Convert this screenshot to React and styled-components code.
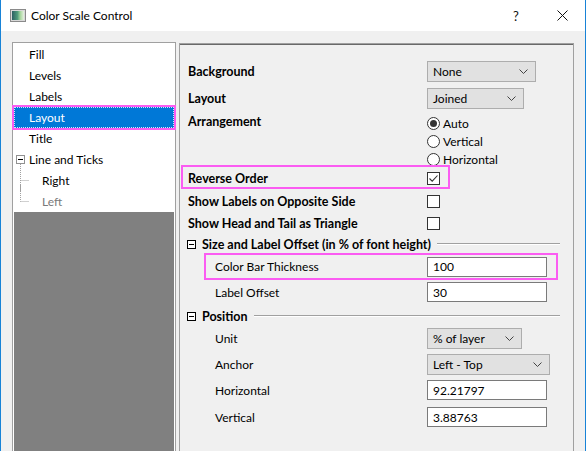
import React from "react";
import styled, { createGlobalStyle } from "styled-components";

const GlobalStyle = createGlobalStyle`
  html, body {
    margin: 0;
    padding: 0;
    background: #f0f0f0;
  }
  body {
    font-family: "Lato", "Noto Sans", sans-serif;
    font-size: 12px;
    color: #000;
  }
`;

const Window = styled.div`
  width: 586px;
  height: 451px;
  box-sizing: border-box;
  border-left: 1px solid #1883d7;
  border-right: 1px solid #1883d7;
  background: #f0f0f0;
  display: flex;
  flex-direction: column;
  overflow: hidden;
`;

const TitleBar = styled.div`
  height: 31px;
  flex: none;
  background: #fff;
  display: flex;
  align-items: center;
  padding-left: 9px;
`;

const TitleText = styled.div`
  margin-left: 5px;
  flex: 1;
  font-size: 12px;
`;

const CaptionButton = styled.div`
  width: 46px;
  height: 31px;
  display: flex;
  align-items: center;
  justify-content: center;
  font-size: 13px;
  color: #111;
`;

const Body = styled.div`
  flex: 1;
  display: flex;
  gap: 3px;
  padding: 11px 11px 0 11px;
`;

const TreePanel = styled.div`
  width: 160px;
  flex: none;
  border: 1px solid #a0a0a0;
  border-bottom: none;
  padding: 1px 1px 0 1px;
  background: #fff;
  display: flex;
  flex-direction: column;
`;

const TreeItem = styled.div`
  height: 21px;
  box-sizing: border-box;
  display: flex;
  align-items: center;
  padding-left: ${({ indent }) => indent}px;
  border: 1px ${({ selected }) => (selected ? "dotted #cfe6fa" : "solid transparent")};
  background: ${({ selected }) => (selected ? "#0078d7" : "transparent")};
  color: ${({ selected, disabled }) =>
    selected ? "#fff" : disabled ? "#7a7a7a" : "#000"};
  outline: ${({ marked }) => (marked ? "2px solid #fb5cf2" : "none")};
`;

const TreeFill = styled.div`
  flex: 1;
  background: #808080;
`;

const ExpandBox = styled.span`
  width: 9px;
  height: 9px;
  box-sizing: border-box;
  border: 1px solid ${({ dark }) => (dark ? "#000" : "#919191")};
  background: #fff;
  flex: none;
  margin-right: ${({ gap }) => gap}px;
  display: flex;
  align-items: center;
  justify-content: center;

  &::after {
    content: "";
    width: 5px;
    height: 1px;
    background: #000;
  }
`;

const TreeText = styled.span`
  margin-left: ${({ offset }) => offset || 0}px;
`;

const Frame = styled.div`
  flex: 1;
  margin-top: 1px;
  border: 1px solid #a0a0a0;
  border-bottom: none;
  display: flex;
  flex-direction: column;
`;

const FrameInner = styled.div`
  flex: 1;
  border-top: 1px solid #696969;
  padding: 13px 13px 0 8px;
  display: flex;
  flex-direction: column;
`;

const Row = styled.div`
  height: ${({ h }) => h}px;
  display: flex;
  align-items: ${({ top }) => (top ? "flex-start" : "center")};
  position: relative;
  flex: none;
`;

const Label = styled.div`
  width: 239px;
  flex: none;
  box-sizing: border-box;
  padding-left: ${({ indent }) => indent || 0}px;
  padding-top: ${({ top }) => top || 0}px;
  font-weight: ${({ bold }) => (bold ? 700 : 400)};
  font-size: ${({ bold }) => (bold ? "12.5px" : "12px")};
  white-space: nowrap;
`;

const Marker = styled.div`
  position: absolute;
  left: ${({ left }) => left}px;
  top: ${({ top }) => top}px;
  width: ${({ w }) => w}px;
  height: ${({ h }) => h}px;
  box-sizing: border-box;
  border: 2px solid #fb5cf2;
  pointer-events: none;
`;

const Dropdown = styled.div`
  width: ${({ w }) => w}px;
  height: 21px;
  box-sizing: border-box;
  border: 1px solid #adadad;
  background: #e1e1e1;
  display: flex;
  align-items: center;
  padding: 0 7px 0 5px;
  justify-content: space-between;
`;

const TextBox = styled.div`
  width: 120px;
  height: 20px;
  box-sizing: border-box;
  border: 1px solid #7a7a7a;
  background: #fff;
  display: flex;
  align-items: center;
  padding-left: 5px;
`;

const Check = styled.div`
  width: 13px;
  height: 13px;
  box-sizing: border-box;
  border: 1px solid #333;
  background: #fff;
  display: flex;
  align-items: center;
  justify-content: center;
`;

const RadioGroup = styled.div`
  display: flex;
  flex-direction: column;
  padding-top: 2px;
`;

const RadioItem = styled.div`
  height: 18px;
  display: flex;
  align-items: center;
  gap: 3px;
`;

const RadioCircle = styled.span`
  width: 13px;
  height: 13px;
  box-sizing: border-box;
  border: 1px solid #333;
  border-radius: 50%;
  background: #fff;
  display: flex;
  align-items: center;
  justify-content: center;

  &::after {
    content: "";
    display: ${({ checked }) => (checked ? "block" : "none")};
    width: 7px;
    height: 7px;
    border-radius: 50%;
    background: #333;
  }
`;

const SectionTitle = styled.div`
  display: flex;
  align-items: center;
  flex: 1;
  margin-left: -1px;
  font-weight: 700;
  font-size: 12.5px;
  white-space: nowrap;
`;

const SectionLine = styled.div`
  flex: 1;
  height: 1px;
  background: #a0a0a0;
  border-bottom: 1px solid #fff;
  margin-left: 6px;
`;

const Chevron = () => (
  <svg width="9" height="5" viewBox="0 0 9 5">
    <path d="M0.5 0.5 L4.5 4.5 L8.5 0.5" fill="none" stroke="#444" strokeWidth="1" />
  </svg>
);

const CheckMark = () => (
  <svg width="11" height="11" viewBox="0 0 11 11">
    <path d="M1.5 5.5 L4.2 8.2 L9.5 2.5" fill="none" stroke="#333" strokeWidth="1.1" />
  </svg>
);

const AppIcon = () => (
  <svg width="16" height="13" viewBox="0 0 16 13">
    <defs>
      <linearGradient id="cs" x1="0" x2="1" y1="0" y2="0">
        <stop offset="0" stopColor="#2d5f63" />
        <stop offset="0.45" stopColor="#4f9a7a" />
        <stop offset="0.7" stopColor="#a9d7a0" />
        <stop offset="1" stopColor="#e6f1e0" />
      </linearGradient>
    </defs>
    <rect x="0.5" y="0.5" width="15" height="12" fill="#d8d8d8" stroke="#8a8a8a" />
    <rect x="2" y="2" width="12" height="9" fill="url(#cs)" />
  </svg>
);

const TreeLines = ({ last }) => (
  <svg width="9" height="21" viewBox="0 0 9 21" style={{ overflow: "visible", flex: "none" }}>
    <path
      d={`M0.5 -6 L0.5 ${last ? 10.5 : 21} M0.5 10.5 L9 10.5`}
      stroke="#a0a0a0"
      strokeDasharray="1 1"
      fill="none"
    />
  </svg>
);

const Close = () => (
  <svg width="11" height="11" viewBox="0 0 11 11">
    <path d="M0.5 0.5 L10.5 10.5 M10.5 0.5 L0.5 10.5" stroke="#111" strokeWidth="1" />
  </svg>
);

const App = () => {
  return (
    <>
      <GlobalStyle />
      <Window>
        <TitleBar>
          <AppIcon />
          <TitleText>Color Scale Control</TitleText>
          <CaptionButton>?</CaptionButton>
          <CaptionButton>
            <Close />
          </CaptionButton>
        </TitleBar>
        <Body>
          <TreePanel>
            <TreeItem indent={14}>Fill</TreeItem>
            <TreeItem indent={14}>Levels</TreeItem>
            <TreeItem indent={14}>Labels</TreeItem>
            <TreeItem indent={14} selected marked>
              Layout
            </TreeItem>
            <TreeItem indent={14}>Title</TreeItem>
            <TreeItem indent={1}>
              <ExpandBox gap={4} />
              Line and Ticks
            </TreeItem>
            <TreeItem indent={5}>
              <TreeLines />
              <TreeText offset={13}>Right</TreeText>
            </TreeItem>
            <TreeItem indent={5} disabled>
              <TreeLines last />
              <TreeText offset={13}>Left</TreeText>
            </TreeItem>
            <TreeFill />
          </TreePanel>

          <Frame>
            <FrameInner>
              <Row h={26}>
                <Label bold>Background</Label>
                <Dropdown w={109}>
                  None
                  <Chevron />
                </Dropdown>
              </Row>
              <Row h={28}>
                <Label bold>Layout</Label>
                <Dropdown w={97}>
                  Joined
                  <Chevron />
                </Dropdown>
              </Row>
              <Row h={55} top>
                <Label bold top={2}>
                  Arrangement
                </Label>
                <RadioGroup>
                  <RadioItem>
                    <RadioCircle checked />
                    Auto
                  </RadioItem>
                  <RadioItem>
                    <RadioCircle />
                    Vertical
                  </RadioItem>
                  <RadioItem>
                    <RadioCircle />
                    Horizontal
                  </RadioItem>
                </RadioGroup>
              </Row>
              <Row h={23}>
                <Marker left={-7} top={-2} w={269} h={24} />
                <Label bold>Reverse Order</Label>
                <Check>
                  <CheckMark />
                </Check>
              </Row>
              <Row h={22}>
                <Label bold>Show Labels on Opposite Side</Label>
                <Check />
              </Row>
              <Row h={22}>
                <Label bold>Show Head and Tail as Triangle</Label>
                <Check />
              </Row>
              <Row h={20}>
                <SectionTitle>
                  <ExpandBox dark gap={6} />
                  Size and Label Offset (in % of font height)
                  <SectionLine />
                </SectionTitle>
              </Row>
              <Row h={25}>
                <Marker left={16} top={-1} w={354} h={27} />
                <Label indent={27}>Color Bar Thickness</Label>
                <TextBox>100</TextBox>
              </Row>
              <Row h={26}>
                <Label indent={27}>Label Offset</Label>
                <TextBox>30</TextBox>
              </Row>
              <Row h={22}>
                <SectionTitle>
                  <ExpandBox dark gap={6} />
                  Position
                  <SectionLine />
                </SectionTitle>
              </Row>
              <Row h={22}>
                <Label indent={27}>Unit</Label>
                <Dropdown w={95}>
                  % of layer
                  <Chevron />
                </Dropdown>
              </Row>
              <Row h={30}>
                <Label indent={27}>Anchor</Label>
                <Dropdown w={123}>
                  Left - Top
                  <Chevron />
                </Dropdown>
              </Row>
              <Row h={22}>
                <Label indent={27}>Horizontal</Label>
                <TextBox>92.21797</TextBox>
              </Row>
              <Row h={32}>
                <Label indent={27}>Vertical</Label>
                <TextBox>3.88763</TextBox>
              </Row>
            </FrameInner>
          </Frame>
        </Body>
      </Window>
    </>
  );
};

export default App;
